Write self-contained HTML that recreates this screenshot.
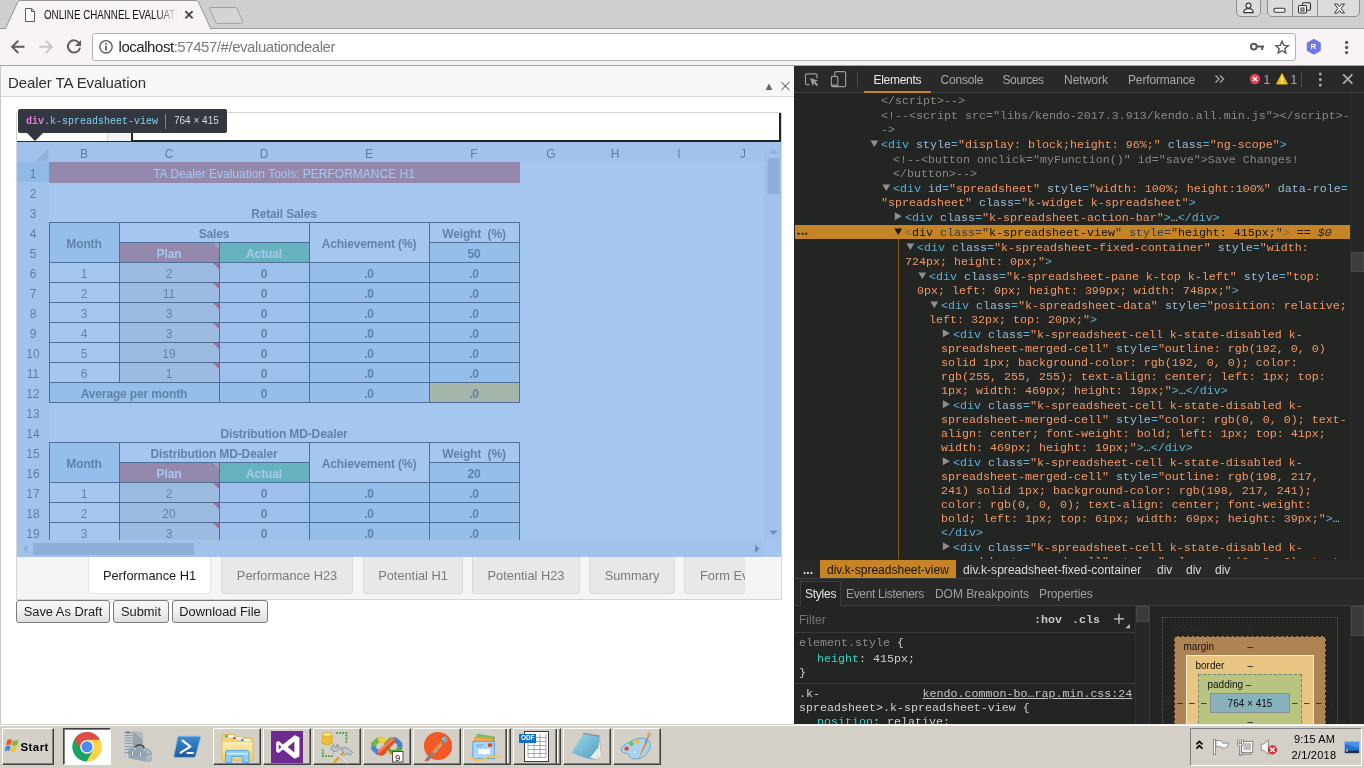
<!DOCTYPE html>
<html>
<head>
<meta charset="utf-8">
<title>ONLINE CHANNEL EVALUATION</title>
<style>
*{box-sizing:border-box;margin:0;padding:0}
html,body{width:1364px;height:768px;overflow:hidden;background:#fff;font-family:"Liberation Sans",sans-serif}
.abs{position:absolute}
#root{position:relative;width:1364px;height:768px;overflow:hidden;will-change:transform}
/* ---------- chrome frame ---------- */
#tabstrip{left:0;top:0;width:1364px;height:29px;background:#cfcfcf}
#toolbar{left:0;top:29px;width:1364px;height:36px;background:#f7f3f7}
#tbline{left:0;top:65px;width:1364px;height:1px;background:#a5a3a5}
#urlbox{left:92px;top:33px;width:1204px;height:28px;background:#fff;border:1px solid #b4b4b4;border-radius:3px}
.t{position:absolute;white-space:pre;line-height:1}
/* ---------- page ---------- */
#page{left:0;top:66px;width:794px;height:658px;background:#fff;overflow:hidden}
#phead{left:1px;top:0;width:793px;height:31px;background:#f7f7f7;border-bottom:1px solid #d9d9d9}
/* ---------- devtools ---------- */
#dt{left:794px;top:66px;width:570px;height:658px;background:#232523;overflow:hidden}
.mono{font-family:"Liberation Mono",monospace;font-size:11.667px}
.ln{position:absolute;height:14px;line-height:14px;white-space:pre;font-family:"Liberation Mono",monospace;font-size:11.667px;color:#898989}
.tg{color:#5db0d7}.an{color:#9bbbdc}.av{color:#f29766}.cm{color:#898989}
.tri{position:absolute;width:0;height:0}
/* ---------- taskbar ---------- */
#taskbar{left:0;top:724px;width:1364px;height:44px;background:#d4d0c8}
.tbtn{position:absolute;top:4px;height:37px;border:1px solid;border-color:#fff #404040 #404040 #fff;box-shadow:inset -1px -1px 0 #808080}
</style>
</head>
<body>
<div id="root">

<!-- ================= CHROME FRAME ================= -->
<div id="tabstrip" class="abs">
  <svg class="abs" style="left:0;top:0" width="260" height="29" viewBox="0 0 260 29">
    <path d="M0 28.5 L5.5 28.5 L18 1.5 Q18.6 0.5 20 0.5 L196 0.5 Q197.6 0.5 198.3 1.8 L210.8 28.5 L260 28.5 L260 29 L0 29 Z" fill="#f7f3f7"/>
    <path d="M5.5 28.5 L18 1.5 Q18.6 0.5 20 0.5 L196 0.5 Q197.6 0.5 198.3 1.8 L210.8 28.5" fill="#f7f3f7" stroke="#959395" stroke-width="1"/>
    <!-- new tab button -->
    <path d="M210.6 7.5 L235.4 7.5 Q236.6 7.5 237.2 8.6 L242.6 21.4 Q243 23.4 241.2 23.4 L217.6 23.4 Q216.2 23.4 215.6 22.2 L209.6 9 Q209.2 7.5 210.6 7.5 Z" fill="#d5d3d5" stroke="#a3a1a3" stroke-width="1"/>
    <!-- favicon -->
    <path d="M25.5 8.5 L31.5 8.5 L34.5 11.5 L34.5 21.5 L25.5 21.5 Z M31.5 8.5 L31.5 11.5 L34.5 11.5" fill="#fff" stroke="#5a5a5a" stroke-width="1"/>
    <!-- close x -->
    <path d="M185.4 11.2 L192.6 18.4 M192.6 11.2 L185.4 18.4" stroke="#444" stroke-width="1.9" fill="none"/>
  </svg>
  <div class="abs" style="left:210px;top:28px;width:1154px;height:1px;background:#9c9a9c"></div>
  <div class="abs" style="left:0;top:28px;width:6px;height:1px;background:#9c9a9c"></div>
  <div class="t" style="left:43.5px;top:8.7px;font-size:12px;color:#111;width:163px;overflow:hidden;transform:scaleX(0.815);transform-origin:0 0">ONLINE CHANNEL EVALUATION</div>
  <div class="abs" style="left:158px;top:6px;width:24px;height:16px;background:linear-gradient(to right,rgba(247,243,247,0),#f7f3f7 80%)"></div>
  <!-- window controls -->
  <div class="abs" style="left:1236px;top:-1px;width:25px;height:18px;border:1px solid #8e8e8e;border-radius:0 0 5px 5px;background:#dcdcdc"></div>
  <div class="abs" style="left:1267px;top:-1px;width:93px;height:18px;border:1px solid #8e8e8e;border-radius:0 0 5px 5px;background:#dcdcdc"></div>
  <div class="abs" style="left:1292px;top:0;width:1px;height:16px;background:#8e8e8e"></div>
  <div class="abs" style="left:1317px;top:0;width:1px;height:16px;background:#8e8e8e"></div>
  <svg class="abs" style="left:1236px;top:0" width="124" height="17" viewBox="0 0 124 17">
    <circle cx="12.5" cy="5.6" r="2.5" fill="#fff" stroke="#333" stroke-width="1.1"/>
    <path d="M7.8 12.6 Q7.8 8.6 12.5 8.6 Q17.2 8.6 17.2 12.6 Z" fill="#fff" stroke="#333" stroke-width="1.1"/>
    <rect x="38" y="8.2" width="11" height="4" rx="1.5" fill="#fff" stroke="#333" stroke-width="1.1"/>
    <rect x="66.5" y="2.8" width="8" height="7.5" rx="1.2" fill="#dcdcdc" stroke="#333" stroke-width="1.1"/>
    <rect x="62.5" y="5.5" width="8" height="7.5" rx="1.2" fill="#fff" stroke="#333" stroke-width="1.1"/>
    <rect x="65" y="8" width="3" height="3" fill="#dcdcdc" stroke="#333" stroke-width="1"/>
    <path d="M98.5 4 L101.5 4 L103.5 6.6 L105.5 4 L108.5 4 L105 8.5 L108.5 13 L105.5 13 L103.5 10.4 L101.5 13 L98.5 13 L102 8.5 Z" fill="#fff" stroke="#333" stroke-width="1"/>
  </svg>
</div>

<div id="toolbar" class="abs"></div>
<div id="tbline" class="abs"></div>
<div id="urlbox" class="abs"></div>
<svg class="abs" style="left:0;top:29px" width="1364" height="36" viewBox="0 29 1364 36">
  <!-- back -->
  <path d="M24.5 46.8 L12.5 46.8 M18.3 40.6 L12.1 46.8 L18.3 53" fill="none" stroke="#5a5a5a" stroke-width="1.9"/>
  <!-- forward -->
  <path d="M39.5 46.8 L51.5 46.8 M45.7 40.6 L51.9 46.8 L45.7 53" fill="none" stroke="#c9c7c9" stroke-width="1.9"/>
  <!-- reload -->
  <path d="M79.2 43.2 A6.1 6.1 0 1 0 80 47.6" fill="none" stroke="#5a5a5a" stroke-width="1.9"/>
  <path d="M81 40 L81 46 L75 46 Z" fill="#5a5a5a"/>
  <!-- info -->
  <circle cx="106" cy="46.8" r="6.2" fill="none" stroke="#5a5a5a" stroke-width="1.4"/>
  <rect x="105.2" y="45.8" width="1.7" height="4.8" fill="#5a5a5a"/>
  <rect x="105.2" y="43" width="1.7" height="1.7" fill="#5a5a5a"/>
  <!-- key -->
  <circle cx="1253.8" cy="46.6" r="2.9" fill="none" stroke="#5a5a5a" stroke-width="2"/>
  <path d="M1256.5 46.6 L1264 46.6 M1262.2 46.6 L1262.2 50" fill="none" stroke="#5a5a5a" stroke-width="2"/>
  <!-- star -->
  <path d="M1282 41.2 L1283.8 45.4 L1288.2 45.8 L1284.8 48.7 L1285.9 53 L1282 50.7 L1278.1 53 L1279.2 48.7 L1275.8 45.8 L1280.2 45.4 Z" fill="none" stroke="#5a5a5a" stroke-width="1.4" stroke-linejoin="miter"/>
  <!-- R hexagon -->
  <path d="M1313.8 38.8 L1320.8 42.8 L1320.8 50.8 L1313.8 54.8 L1306.8 50.8 L1306.8 42.8 Z" fill="#6b79e6"/>
  <!-- menu -->
  <circle cx="1346.6" cy="42.4" r="1.7" fill="#5a5a5a"/><circle cx="1346.6" cy="47.5" r="1.7" fill="#5a5a5a"/><circle cx="1346.6" cy="52.6" r="1.7" fill="#5a5a5a"/>
</svg>
<div class="t" style="left:1310.6px;top:43.3px;font-size:8px;font-weight:bold;color:#fff">R</div>
<div class="t" style="left:118.5px;top:38.5px;font-size:15px;letter-spacing:-0.45px;color:#222">localhost<span style="color:#7a7a7a">:57457/#/evaluationdealer</span></div>

<!-- ================= PAGE ================= -->
<div id="page" class="abs">
  <div class="abs" style="left:0;top:0;width:1px;height:658px;background:#c8c8c8"></div>
  <div id="phead" class="abs"></div>
  <div class="t" style="left:8px;top:9px;font-size:15px;color:#2e2e2e;letter-spacing:-0.08px">Dealer TA Evaluation</div>
  <svg class="abs" style="left:760px;top:14px" width="34" height="14" viewBox="760 80 34 14">
    <path d="M765.6 90 L769 83.2 L772.4 90 Z" fill="#6a6a6a"/>
    <path d="M781.3 82 L789.5 90.2 M789.5 82 L781.3 90.2" stroke="#3a3a3a" stroke-width="1" fill="none"/>
  </svg>
  <div class="abs" style="left:16px;top:46px;width:766px;height:488px;border:1px solid #d5d5d5;background:#fff"></div>
<div class="abs" style="left:107px;top:47px;width:1px;height:28px;background:#d9d9d9"></div>
<div class="abs" style="left:108px;top:67px;width:24px;height:8px;background:#f4f4f4"></div>
<div class="abs" style="left:17px;top:75px;width:115px;height:1px;background:#2a2a2a"></div>
<div class="abs" style="left:131px;top:47px;width:650px;height:29px;border:2px solid #222;border-top:0;background:#fff"></div>
<div class="abs" style="left:17px;top:76px;width:764px;height:415px;overflow:hidden;background:#fff;font-family:'Liberation Sans',sans-serif"><div class="abs" style="left:0px;top:0px;width:748px;height:20px;background:#f3f3f3"></div><div class="abs" style="left:0px;top:20px;width:32px;height:378px;background:#f3f3f3"></div><div class="abs" style="left:0px;top:20px;width:32px;height:20px;background:#c3dbe6"></div><svg class="abs" style="left:0;top:0" width="32" height="20"><path d="M31.5 6 L31.5 19.5 L18 19.5 Z" fill="#c4c4c4"/></svg><div class="abs" style="left:32px;top:0px;width:70px;height:20px;text-align:center;line-height:24px;font-size:12px;color:#262626;overflow:hidden">B</div><div class="abs" style="left:102px;top:0px;width:100px;height:20px;text-align:center;line-height:24px;font-size:12px;color:#262626;overflow:hidden">C</div><div class="abs" style="left:202px;top:0px;width:90px;height:20px;text-align:center;line-height:24px;font-size:12px;color:#262626;overflow:hidden">D</div><div class="abs" style="left:292px;top:0px;width:120px;height:20px;text-align:center;line-height:24px;font-size:12px;color:#262626;overflow:hidden">E</div><div class="abs" style="left:412px;top:0px;width:90px;height:20px;text-align:center;line-height:24px;font-size:12px;color:#262626;overflow:hidden">F</div><div class="abs" style="left:502px;top:0px;width:64px;height:20px;text-align:center;line-height:24px;font-size:12px;color:#262626;overflow:hidden">G</div><div class="abs" style="left:566px;top:0px;width:64px;height:20px;text-align:center;line-height:24px;font-size:12px;color:#262626;overflow:hidden">H</div><div class="abs" style="left:630px;top:0px;width:64px;height:20px;text-align:center;line-height:24px;font-size:12px;color:#262626;overflow:hidden">I</div><div class="abs" style="left:694px;top:0px;width:64px;height:20px;text-align:center;line-height:24px;font-size:12px;color:#262626;overflow:hidden">J</div><div class="abs" style="left:0px;top:20px;width:32px;height:20px;text-align:center;line-height:24px;font-size:12px;color:#262626">1</div><div class="abs" style="left:0px;top:40px;width:32px;height:20px;text-align:center;line-height:24px;font-size:12px;color:#262626">2</div><div class="abs" style="left:0px;top:60px;width:32px;height:20px;text-align:center;line-height:24px;font-size:12px;color:#262626">3</div><div class="abs" style="left:0px;top:80px;width:32px;height:20px;text-align:center;line-height:24px;font-size:12px;color:#262626">4</div><div class="abs" style="left:0px;top:100px;width:32px;height:20px;text-align:center;line-height:24px;font-size:12px;color:#262626">5</div><div class="abs" style="left:0px;top:120px;width:32px;height:20px;text-align:center;line-height:24px;font-size:12px;color:#262626">6</div><div class="abs" style="left:0px;top:140px;width:32px;height:20px;text-align:center;line-height:24px;font-size:12px;color:#262626">7</div><div class="abs" style="left:0px;top:160px;width:32px;height:20px;text-align:center;line-height:24px;font-size:12px;color:#262626">8</div><div class="abs" style="left:0px;top:180px;width:32px;height:20px;text-align:center;line-height:24px;font-size:12px;color:#262626">9</div><div class="abs" style="left:0px;top:200px;width:32px;height:20px;text-align:center;line-height:24px;font-size:12px;color:#262626">10</div><div class="abs" style="left:0px;top:220px;width:32px;height:20px;text-align:center;line-height:24px;font-size:12px;color:#262626">11</div><div class="abs" style="left:0px;top:240px;width:32px;height:20px;text-align:center;line-height:24px;font-size:12px;color:#262626">12</div><div class="abs" style="left:0px;top:260px;width:32px;height:20px;text-align:center;line-height:24px;font-size:12px;color:#262626">13</div><div class="abs" style="left:0px;top:280px;width:32px;height:20px;text-align:center;line-height:24px;font-size:12px;color:#262626">14</div><div class="abs" style="left:0px;top:300px;width:32px;height:20px;text-align:center;line-height:24px;font-size:12px;color:#262626">15</div><div class="abs" style="left:0px;top:320px;width:32px;height:20px;text-align:center;line-height:24px;font-size:12px;color:#262626">16</div><div class="abs" style="left:0px;top:340px;width:32px;height:20px;text-align:center;line-height:24px;font-size:12px;color:#262626">17</div><div class="abs" style="left:0px;top:360px;width:32px;height:20px;text-align:center;line-height:24px;font-size:12px;color:#262626">18</div><div class="abs" style="left:0px;top:380px;width:32px;height:20px;text-align:center;line-height:24px;font-size:12px;color:#262626">19</div><div class="abs" style="left:32px;top:20px;width:471px;height:21px;background:rgb(204,75,60)"></div><div class="abs" style="left:32px;top:20px;width:470px;height:20px;text-align:center;line-height:24px;font-size:12px;color:#fff;">TA Dealer Evaluation Tools: PERFORMANCE H1</div><div class="abs" style="left:32px;top:60px;width:470px;height:20px;text-align:center;line-height:24px;font-size:12px;color:#303a30;font-weight:bold;letter-spacing:-0.14px;">Retail Sales</div><div class="abs" style="left:32px;top:80px;width:70px;height:40px;background:rgb(212,231,240);text-align:center;line-height:44px;font-size:12px;color:#303a30;font-weight:bold;letter-spacing:-0.14px;">Month</div><div class="abs" style="left:102px;top:80px;width:190px;height:20px;text-align:center;line-height:24px;font-size:12px;color:#303a30;font-weight:bold;letter-spacing:-0.14px;">Sales</div><div class="abs" style="left:102px;top:100px;width:100px;height:20px;background:rgb(204,75,60);text-align:center;line-height:24px;font-size:12px;color:#fff;font-weight:bold;letter-spacing:-0.14px;">Plan</div><div class="abs" style="left:202px;top:100px;width:90px;height:20px;background:rgb(72,196,112);text-align:center;line-height:24px;font-size:12px;color:#fff;font-weight:bold;letter-spacing:-0.14px;">Actual</div><div class="abs" style="left:292px;top:80px;width:120px;height:40px;text-align:center;line-height:44px;font-size:12px;color:#303a30;font-weight:bold;letter-spacing:-0.14px;">Achievement (%)</div><div class="abs" style="left:412px;top:80px;width:90px;height:20px;text-align:center;line-height:24px;font-size:12px;color:#303a30;font-weight:bold;letter-spacing:-0.14px;">Weight&nbsp; (%)</div><div class="abs" style="left:412px;top:100px;width:90px;height:20px;background:rgb(212,231,240);text-align:center;line-height:24px;font-size:12px;color:#303a30;font-weight:bold;letter-spacing:-0.14px;">50</div><div class="abs" style="left:32px;top:120px;width:70px;height:20px;text-align:center;line-height:24px;font-size:12px;color:#303a30;">1</div><div class="abs" style="left:102px;top:120px;width:100px;height:20px;background:rgb(232,222,214);text-align:center;line-height:24px;font-size:12px;color:#303a30;">2</div><div class="abs" style="left:202px;top:120px;width:90px;height:20px;background:rgb(232,240,246);text-align:center;line-height:24px;font-size:12px;color:#303a30;font-weight:bold;letter-spacing:-0.14px;">0</div><div class="abs" style="left:292px;top:120px;width:120px;height:20px;background:rgb(212,231,240);text-align:center;line-height:24px;font-size:12px;color:#303a30;font-weight:bold;letter-spacing:-0.14px;">.0</div><div class="abs" style="left:412px;top:120px;width:90px;height:20px;background:rgb(212,231,240);text-align:center;line-height:24px;font-size:12px;color:#303a30;font-weight:bold;letter-spacing:-0.14px;">.0</div><div class="abs" style="left:32px;top:140px;width:70px;height:20px;text-align:center;line-height:24px;font-size:12px;color:#303a30;">2</div><div class="abs" style="left:102px;top:140px;width:100px;height:20px;background:rgb(232,222,214);text-align:center;line-height:24px;font-size:12px;color:#303a30;">11</div><div class="abs" style="left:202px;top:140px;width:90px;height:20px;background:rgb(232,240,246);text-align:center;line-height:24px;font-size:12px;color:#303a30;font-weight:bold;letter-spacing:-0.14px;">0</div><div class="abs" style="left:292px;top:140px;width:120px;height:20px;background:rgb(212,231,240);text-align:center;line-height:24px;font-size:12px;color:#303a30;font-weight:bold;letter-spacing:-0.14px;">.0</div><div class="abs" style="left:412px;top:140px;width:90px;height:20px;background:rgb(212,231,240);text-align:center;line-height:24px;font-size:12px;color:#303a30;font-weight:bold;letter-spacing:-0.14px;">.0</div><div class="abs" style="left:32px;top:160px;width:70px;height:20px;text-align:center;line-height:24px;font-size:12px;color:#303a30;">3</div><div class="abs" style="left:102px;top:160px;width:100px;height:20px;background:rgb(232,222,214);text-align:center;line-height:24px;font-size:12px;color:#303a30;">3</div><div class="abs" style="left:202px;top:160px;width:90px;height:20px;background:rgb(232,240,246);text-align:center;line-height:24px;font-size:12px;color:#303a30;font-weight:bold;letter-spacing:-0.14px;">0</div><div class="abs" style="left:292px;top:160px;width:120px;height:20px;background:rgb(212,231,240);text-align:center;line-height:24px;font-size:12px;color:#303a30;font-weight:bold;letter-spacing:-0.14px;">.0</div><div class="abs" style="left:412px;top:160px;width:90px;height:20px;background:rgb(212,231,240);text-align:center;line-height:24px;font-size:12px;color:#303a30;font-weight:bold;letter-spacing:-0.14px;">.0</div><div class="abs" style="left:32px;top:180px;width:70px;height:20px;text-align:center;line-height:24px;font-size:12px;color:#303a30;">4</div><div class="abs" style="left:102px;top:180px;width:100px;height:20px;background:rgb(232,222,214);text-align:center;line-height:24px;font-size:12px;color:#303a30;">3</div><div class="abs" style="left:202px;top:180px;width:90px;height:20px;background:rgb(232,240,246);text-align:center;line-height:24px;font-size:12px;color:#303a30;font-weight:bold;letter-spacing:-0.14px;">0</div><div class="abs" style="left:292px;top:180px;width:120px;height:20px;background:rgb(212,231,240);text-align:center;line-height:24px;font-size:12px;color:#303a30;font-weight:bold;letter-spacing:-0.14px;">.0</div><div class="abs" style="left:412px;top:180px;width:90px;height:20px;background:rgb(212,231,240);text-align:center;line-height:24px;font-size:12px;color:#303a30;font-weight:bold;letter-spacing:-0.14px;">.0</div><div class="abs" style="left:32px;top:200px;width:70px;height:20px;text-align:center;line-height:24px;font-size:12px;color:#303a30;">5</div><div class="abs" style="left:102px;top:200px;width:100px;height:20px;background:rgb(232,222,214);text-align:center;line-height:24px;font-size:12px;color:#303a30;">19</div><div class="abs" style="left:202px;top:200px;width:90px;height:20px;background:rgb(232,240,246);text-align:center;line-height:24px;font-size:12px;color:#303a30;font-weight:bold;letter-spacing:-0.14px;">0</div><div class="abs" style="left:292px;top:200px;width:120px;height:20px;background:rgb(212,231,240);text-align:center;line-height:24px;font-size:12px;color:#303a30;font-weight:bold;letter-spacing:-0.14px;">.0</div><div class="abs" style="left:412px;top:200px;width:90px;height:20px;background:rgb(212,231,240);text-align:center;line-height:24px;font-size:12px;color:#303a30;font-weight:bold;letter-spacing:-0.14px;">.0</div><div class="abs" style="left:32px;top:220px;width:70px;height:20px;text-align:center;line-height:24px;font-size:12px;color:#303a30;">6</div><div class="abs" style="left:102px;top:220px;width:100px;height:20px;background:rgb(232,222,214);text-align:center;line-height:24px;font-size:12px;color:#303a30;">1</div><div class="abs" style="left:202px;top:220px;width:90px;height:20px;background:rgb(232,240,246);text-align:center;line-height:24px;font-size:12px;color:#303a30;font-weight:bold;letter-spacing:-0.14px;">0</div><div class="abs" style="left:292px;top:220px;width:120px;height:20px;background:rgb(212,231,240);text-align:center;line-height:24px;font-size:12px;color:#303a30;font-weight:bold;letter-spacing:-0.14px;">.0</div><div class="abs" style="left:412px;top:220px;width:90px;height:20px;background:rgb(212,231,240);text-align:center;line-height:24px;font-size:12px;color:#303a30;font-weight:bold;letter-spacing:-0.14px;">.0</div><div class="abs" style="left:32px;top:240px;width:170px;height:20px;background:rgb(212,231,240);text-align:center;line-height:24px;font-size:12px;color:#303a30;font-weight:bold;letter-spacing:-0.14px;">Average per month</div><div class="abs" style="left:202px;top:240px;width:90px;height:20px;background:rgb(212,231,240);text-align:center;line-height:24px;font-size:12px;color:#303a30;font-weight:bold;letter-spacing:-0.14px;">0</div><div class="abs" style="left:292px;top:240px;width:120px;height:20px;background:rgb(212,231,240);text-align:center;line-height:24px;font-size:12px;color:#303a30;font-weight:bold;letter-spacing:-0.14px;">.0</div><div class="abs" style="left:412px;top:240px;width:90px;height:20px;background:rgb(254,207,54);text-align:center;line-height:24px;font-size:12px;color:#303a30;font-weight:bold;letter-spacing:-0.14px;">.0</div><div class="abs" style="left:32px;top:280px;width:470px;height:20px;text-align:center;line-height:24px;font-size:12px;color:#303a30;font-weight:bold;letter-spacing:-0.14px;">Distribution MD-Dealer</div><div class="abs" style="left:32px;top:300px;width:70px;height:40px;background:rgb(212,231,240);text-align:center;line-height:44px;font-size:12px;color:#303a30;font-weight:bold;letter-spacing:-0.14px;">Month</div><div class="abs" style="left:102px;top:300px;width:190px;height:20px;text-align:center;line-height:24px;font-size:12px;color:#303a30;font-weight:bold;letter-spacing:-0.14px;">Distribution MD-Dealer</div><div class="abs" style="left:102px;top:320px;width:100px;height:20px;background:rgb(204,75,60);text-align:center;line-height:24px;font-size:12px;color:#fff;font-weight:bold;letter-spacing:-0.14px;">Plan</div><div class="abs" style="left:202px;top:320px;width:90px;height:20px;background:rgb(72,196,112);text-align:center;line-height:24px;font-size:12px;color:#fff;font-weight:bold;letter-spacing:-0.14px;">Actual</div><div class="abs" style="left:292px;top:300px;width:120px;height:40px;text-align:center;line-height:44px;font-size:12px;color:#303a30;font-weight:bold;letter-spacing:-0.14px;">Achievement (%)</div><div class="abs" style="left:412px;top:300px;width:90px;height:20px;text-align:center;line-height:24px;font-size:12px;color:#303a30;font-weight:bold;letter-spacing:-0.14px;">Weight&nbsp; (%)</div><div class="abs" style="left:412px;top:320px;width:90px;height:20px;background:rgb(212,231,240);text-align:center;line-height:24px;font-size:12px;color:#303a30;font-weight:bold;letter-spacing:-0.14px;">20</div><div class="abs" style="left:32px;top:340px;width:70px;height:20px;text-align:center;line-height:24px;font-size:12px;color:#303a30;">1</div><div class="abs" style="left:102px;top:340px;width:100px;height:20px;background:rgb(232,222,214);text-align:center;line-height:24px;font-size:12px;color:#303a30;">2</div><div class="abs" style="left:202px;top:340px;width:90px;height:20px;background:rgb(232,240,246);text-align:center;line-height:24px;font-size:12px;color:#303a30;font-weight:bold;letter-spacing:-0.14px;">0</div><div class="abs" style="left:292px;top:340px;width:120px;height:20px;background:rgb(212,231,240);text-align:center;line-height:24px;font-size:12px;color:#303a30;font-weight:bold;letter-spacing:-0.14px;">.0</div><div class="abs" style="left:412px;top:340px;width:90px;height:20px;background:rgb(212,231,240);text-align:center;line-height:24px;font-size:12px;color:#303a30;font-weight:bold;letter-spacing:-0.14px;">.0</div><div class="abs" style="left:32px;top:360px;width:70px;height:20px;text-align:center;line-height:24px;font-size:12px;color:#303a30;">2</div><div class="abs" style="left:102px;top:360px;width:100px;height:20px;background:rgb(232,222,214);text-align:center;line-height:24px;font-size:12px;color:#303a30;">20</div><div class="abs" style="left:202px;top:360px;width:90px;height:20px;background:rgb(232,240,246);text-align:center;line-height:24px;font-size:12px;color:#303a30;font-weight:bold;letter-spacing:-0.14px;">0</div><div class="abs" style="left:292px;top:360px;width:120px;height:20px;background:rgb(212,231,240);text-align:center;line-height:24px;font-size:12px;color:#303a30;font-weight:bold;letter-spacing:-0.14px;">.0</div><div class="abs" style="left:412px;top:360px;width:90px;height:20px;background:rgb(212,231,240);text-align:center;line-height:24px;font-size:12px;color:#303a30;font-weight:bold;letter-spacing:-0.14px;">.0</div><div class="abs" style="left:32px;top:380px;width:70px;height:20px;text-align:center;line-height:24px;font-size:12px;color:#303a30;">3</div><div class="abs" style="left:102px;top:380px;width:100px;height:20px;background:rgb(232,222,214);text-align:center;line-height:24px;font-size:12px;color:#303a30;">3</div><div class="abs" style="left:202px;top:380px;width:90px;height:20px;background:rgb(232,240,246);text-align:center;line-height:24px;font-size:12px;color:#303a30;font-weight:bold;letter-spacing:-0.14px;">0</div><div class="abs" style="left:292px;top:380px;width:120px;height:20px;background:rgb(212,231,240);text-align:center;line-height:24px;font-size:12px;color:#303a30;font-weight:bold;letter-spacing:-0.14px;">.0</div><div class="abs" style="left:412px;top:380px;width:90px;height:20px;background:rgb(212,231,240);text-align:center;line-height:24px;font-size:12px;color:#303a30;font-weight:bold;letter-spacing:-0.14px;">.0</div><div class="abs" style="left:32px;top:80px;width:471px;height:1px;background:#000"></div><div class="abs" style="left:102px;top:100px;width:190px;height:1px;background:#000"></div><div class="abs" style="left:412px;top:100px;width:91px;height:1px;background:#000"></div><div class="abs" style="left:32px;top:120px;width:471px;height:1px;background:#000"></div><div class="abs" style="left:32px;top:140px;width:471px;height:1px;background:#000"></div><div class="abs" style="left:32px;top:160px;width:471px;height:1px;background:#000"></div><div class="abs" style="left:32px;top:180px;width:471px;height:1px;background:#000"></div><div class="abs" style="left:32px;top:200px;width:471px;height:1px;background:#000"></div><div class="abs" style="left:32px;top:220px;width:471px;height:1px;background:#000"></div><div class="abs" style="left:32px;top:240px;width:471px;height:1px;background:#000"></div><div class="abs" style="left:32px;top:260px;width:471px;height:1px;background:#000"></div><div class="abs" style="left:32px;top:80px;width:1px;height:181px;background:#000"></div><div class="abs" style="left:502px;top:80px;width:1px;height:181px;background:#000"></div><div class="abs" style="left:102px;top:80px;width:1px;height:161px;background:#000"></div><div class="abs" style="left:202px;top:100px;width:1px;height:161px;background:#000"></div><div class="abs" style="left:292px;top:80px;width:1px;height:181px;background:#000"></div><div class="abs" style="left:412px;top:80px;width:1px;height:181px;background:#000"></div><svg class="abs" style="left:196px;top:101px" width="6" height="6"><path d="M0 0 L6 0 L6 6 Z" fill="#f28a8a"/></svg><svg class="abs" style="left:196px;top:121px" width="6" height="6"><path d="M0 0 L6 0 L6 6 Z" fill="#ff0000"/></svg><svg class="abs" style="left:196px;top:141px" width="6" height="6"><path d="M0 0 L6 0 L6 6 Z" fill="#ff0000"/></svg><svg class="abs" style="left:196px;top:161px" width="6" height="6"><path d="M0 0 L6 0 L6 6 Z" fill="#ff0000"/></svg><svg class="abs" style="left:196px;top:181px" width="6" height="6"><path d="M0 0 L6 0 L6 6 Z" fill="#ff0000"/></svg><svg class="abs" style="left:196px;top:201px" width="6" height="6"><path d="M0 0 L6 0 L6 6 Z" fill="#ff0000"/></svg><svg class="abs" style="left:196px;top:221px" width="6" height="6"><path d="M0 0 L6 0 L6 6 Z" fill="#ff0000"/></svg><div class="abs" style="left:32px;top:300px;width:471px;height:1px;background:#000"></div><div class="abs" style="left:102px;top:320px;width:190px;height:1px;background:#000"></div><div class="abs" style="left:412px;top:320px;width:91px;height:1px;background:#000"></div><div class="abs" style="left:32px;top:340px;width:471px;height:1px;background:#000"></div><div class="abs" style="left:32px;top:360px;width:471px;height:1px;background:#000"></div><div class="abs" style="left:32px;top:380px;width:471px;height:1px;background:#000"></div><div class="abs" style="left:32px;top:300px;width:1px;height:99px;background:#000"></div><div class="abs" style="left:502px;top:300px;width:1px;height:99px;background:#000"></div><div class="abs" style="left:102px;top:300px;width:1px;height:99px;background:#000"></div><div class="abs" style="left:202px;top:320px;width:1px;height:79px;background:#000"></div><div class="abs" style="left:292px;top:300px;width:1px;height:99px;background:#000"></div><div class="abs" style="left:412px;top:300px;width:1px;height:99px;background:#000"></div><svg class="abs" style="left:196px;top:321px" width="6" height="6"><path d="M0 0 L6 0 L6 6 Z" fill="#f28a8a"/></svg><svg class="abs" style="left:196px;top:341px" width="6" height="6"><path d="M0 0 L6 0 L6 6 Z" fill="#ff0000"/></svg><svg class="abs" style="left:196px;top:361px" width="6" height="6"><path d="M0 0 L6 0 L6 6 Z" fill="#ff0000"/></svg><svg class="abs" style="left:196px;top:381px" width="6" height="6"><path d="M0 0 L6 0 L6 6 Z" fill="#ff0000"/></svg><div class="abs" style="left:748px;top:0px;width:16px;height:398px;background:#f3f3f3;border-left:1px solid #e2e2e2"></div><svg class="abs" style="left:748px;top:0" width="16" height="398"><path d="M4 11.5 L8.5 7 L13 11.5 Z" fill="#b4b4b4"/><rect x="2.5" y="16" width="12" height="36" fill="#b8b8b8"/><path d="M4.5 388.5 L12.5 388.5 L8.5 393 Z" fill="#555"/></svg><div class="abs" style="left:0px;top:398px;width:764px;height:17px;background:#f3f3f3"></div><div class="abs" style="left:748px;top:398px;width:16px;height:17px;background:#fbfbfb"></div><svg class="abs" style="left:0;top:398px" width="764" height="17"><path d="M10.5 4.5 L10.5 13 L6 8.8 Z" fill="#b4b4b4"/><rect x="16" y="3" width="161" height="12" fill="#b8b8b8"/><path d="M738 4.5 L738 13 L742.5 8.8 Z" fill="#555"/></svg><div class="abs" style="left:0;top:0;width:764px;height:415px;background:rgba(119,169,230,.66)"></div></div>
<div class="abs" style="left:17px;top:491px;width:764px;height:42px;background:#f5f5f5"></div>
<div class="abs" style="left:17px;top:491px;width:728px;height:42px;overflow:hidden"><div class="abs" style="left:71px;top:0;width:123px;background:#fff;color:#1a1a1a;border:1px solid #e4e4e4;border-top:0;height:37px;border-radius:0 0 4px 4px;font-size:12.8px;line-height:37px;text-align:center;white-space:pre;overflow:hidden">Performance H1</div><div class="abs" style="left:204px;top:0;width:132px;background:#e8e8e8;color:#7b7b7b;border:1px solid #dadada;border-top:0;height:37px;border-radius:0 0 4px 4px;font-size:12.8px;line-height:37px;text-align:center;white-space:pre;overflow:hidden">Performance H23</div><div class="abs" style="left:346px;top:0;width:100px;background:#e8e8e8;color:#7b7b7b;border:1px solid #dadada;border-top:0;height:37px;border-radius:0 0 4px 4px;font-size:12.8px;line-height:37px;text-align:center;white-space:pre;overflow:hidden">Potential H1</div><div class="abs" style="left:455px;top:0;width:108px;background:#e8e8e8;color:#7b7b7b;border:1px solid #dadada;border-top:0;height:37px;border-radius:0 0 4px 4px;font-size:12.8px;line-height:37px;text-align:center;white-space:pre;overflow:hidden">Potential H23</div><div class="abs" style="left:572px;top:0;width:86px;background:#e8e8e8;color:#7b7b7b;border:1px solid #dadada;border-top:0;height:37px;border-radius:0 0 4px 4px;font-size:12.8px;line-height:37px;text-align:center;white-space:pre;overflow:hidden">Summary</div><div class="abs" style="left:667px;top:0;width:130px;background:#e8e8e8;color:#7b7b7b;border:1px solid #dadada;border-top:0;height:37px;border-radius:0 0 4px 4px;font-size:12.8px;line-height:37px;text-align:left;padding-left:15px;white-space:pre;overflow:hidden">Form Evaluation</div></div>
<div class="abs" style="left:16px;top:534px;width:94px;height:23px;border:1px solid #7a7a7a;border-radius:3px;background:linear-gradient(#f8f8f8,#f1f1f1 45%,#dedede);font-size:12.85px;line-height:21.5px;text-align:center;color:#1a1a1a;white-space:pre">Save As Draft</div>
<div class="abs" style="left:113px;top:534px;width:56px;height:23px;border:1px solid #7a7a7a;border-radius:3px;background:linear-gradient(#f8f8f8,#f1f1f1 45%,#dedede);font-size:12.85px;line-height:21.5px;text-align:center;color:#1a1a1a;white-space:pre">Submit</div>
<div class="abs" style="left:172px;top:534px;width:96px;height:23px;border:1px solid #7a7a7a;border-radius:3px;background:linear-gradient(#f8f8f8,#f1f1f1 45%,#dedede);font-size:12.85px;line-height:21.5px;text-align:center;color:#1a1a1a;white-space:pre">Download File</div>
<div class="abs" style="left:18px;top:43px;width:209px;height:24px;background:#333740;border-radius:2px"></div>
<svg class="abs" style="left:27px;top:67px" width="16" height="8"><path d="M0 0 L16 0 L8 8 Z" fill="#333740"/></svg>
<div class="t" style="left:26px;top:51.2px;font-family:'Liberation Mono',monospace;font-size:10px;color:#7fd2f5"><span style="color:#ee78e6;font-weight:bold">div</span>.k-spreadsheet-view</div>
<div class="abs" style="left:165px;top:48px;width:1px;height:15px;background:#8b8172"></div>
<div class="t" style="left:174px;top:50.099999999999994px;font-size:10px;color:#d9d9d9">764 × 415</div>
</div>

<!-- ================= DEVTOOLS ================= -->
<div id="dt" class="abs">
  <div class="abs" style="left:0px;top:0px;width:570px;height:26px;background:#292929"></div>
<div class="abs" style="left:0px;top:26px;width:570px;height:1px;background:#3d3d3d"></div>
<div class="abs" style="left:70px;top:25px;width:67px;height:2px;background:#cc8518"></div>
<div class="abs" style="left:63px;top:5px;width:1px;height:16px;background:#4a4a4a"></div>
<div class="abs" style="left:507px;top:5px;width:1px;height:16px;background:#4a4a4a"></div>
<div class="t" style="left:79.5px;top:8px;font-size:12px;color:#e8e8e8;letter-spacing:-0.3px">Elements</div>
<div class="t" style="left:146.5px;top:8px;font-size:12px;color:#a8a8a8;letter-spacing:-0.2px">Console</div>
<div class="t" style="left:208.5px;top:8px;font-size:12px;color:#a8a8a8;letter-spacing:-0.4px">Sources</div>
<div class="t" style="left:270px;top:8px;font-size:12px;color:#a8a8a8;letter-spacing:0px">Network</div>
<div class="t" style="left:334px;top:8px;font-size:12px;color:#a8a8a8;letter-spacing:-0.15px">Performance</div>
<div class="t" style="left:469.5px;top:8px;font-size:12px;color:#a8a8a8">1</div>
<div class="t" style="left:496.5px;top:8px;font-size:12px;color:#a8a8a8">1</div>
<svg class="abs" style="left:0;top:0" width="570" height="27" viewBox="794 66 570 27">
<path d="M817 78.5 L817 75.2 Q817 73.8 815.6 73.8 L806.9 73.8 Q805.5 73.8 805.5 75.2 L805.5 83.3 Q805.5 84.7 806.9 84.7 L809.5 84.7" fill="none" stroke="#9a9a9a" stroke-width="1.2"/>
<path d="M810 78 L818 80.6 L815.3 81.9 L818.2 84.8 L816.8 86.2 L813.9 83.3 L812.6 86 Z" fill="#9a9a9a"/>
<rect x="834.8" y="71.6" width="10.8" height="15" rx="1.2" fill="none" stroke="#9a9a9a" stroke-width="1.2"/>
<rect x="831.4" y="76.4" width="6.4" height="10.2" rx="1.2" fill="#292929" stroke="#9a9a9a" stroke-width="1.2"/>
<rect x="832" y="84.6" width="5.2" height="1.6" fill="#9a9a9a"/>
<path d="M1215.5 75.5 L1219 79 L1215.5 82.5 M1220 75.5 L1223.5 79 L1220 82.5" fill="none" stroke="#a8a8a8" stroke-width="1.3"/>
<circle cx="1255" cy="79" r="5.2" fill="#e0404f"/>
<path d="M1252.9 76.9 L1257.1 81.1 M1257.1 76.9 L1252.9 81.1" stroke="#fff" stroke-width="1.4"/>
<path d="M1282 73.6 L1287.4 84 L1276.6 84 Z" fill="#f4bd00" stroke="#f4bd00" stroke-width="1" stroke-linejoin="round"/>
<rect x="1281.3" y="77" width="1.5" height="4" fill="#fff"/><rect x="1281.3" y="82" width="1.5" height="1.4" fill="#fff"/>
<circle cx="1320.3" cy="73.9" r="1.5" fill="#a8a8a8"/><circle cx="1320.3" cy="79.4" r="1.5" fill="#a8a8a8"/><circle cx="1320.3" cy="84.9" r="1.5" fill="#a8a8a8"/>
<path d="M1343.2 74.4 L1352.4 83.6 M1352.4 74.4 L1343.2 83.6" stroke="#b4b4b4" stroke-width="1.6"/>
</svg>
<div class="abs" style="left:0;top:27px;width:570px;height:466px;overflow:hidden"><div class="abs" style="left:0;top:-27px;width:570px;height:600px"><div class="abs" style="left:1px;top:159px;width:555px;height:14px;background:#c58527"></div><div class="abs" style="left:104px;top:173px;width:1px;height:321px;background:#8a5a14"></div><div class="ln" style="left:87px;top:28px">&lt;/script&gt;--&gt;</div><div class="ln" style="left:87px;top:43px">&lt;!--&lt;script src=&quot;libs/kendo-2017.3.913/kendo.all.min.js&quot;&gt;&lt;/script&gt;-</div><div class="ln" style="left:87px;top:57px">-&gt;</div><div class="ln" style="left:87px;top:72px"><span class="tg">&lt;div</span> <span class="an">style</span><span class="tg">=</span><span class="av">"display: block;height: 96%;"</span> <span class="an">class</span><span class="tg">=</span><span class="av">"ng-scope"</span><span class="tg">&gt;</span></div><svg class="abs" style="left:76px;top:74px" width="9" height="8"><path d="M0.4 0.6 L8.2 0.6 L4.3 6.9 Z" fill="#8f8f8f"/></svg><div class="ln" style="left:99px;top:87px">&lt;!--&lt;button onclick=&quot;myFunction()&quot; id=&quot;save&quot;&gt;Save Changes!</div><div class="ln" style="left:99px;top:101px">&lt;/button&gt;--&gt;</div><div class="ln" style="left:99px;top:116px"><span class="tg">&lt;div</span> <span class="an">id</span><span class="tg">=</span><span class="av">"spreadsheet"</span> <span class="an">style</span><span class="tg">=</span><span class="av">"width: 100%; height:100%"</span> <span class="an">data-role</span><span class="tg">=</span></div><svg class="abs" style="left:88px;top:118px" width="9" height="8"><path d="M0.4 0.6 L8.2 0.6 L4.3 6.9 Z" fill="#8f8f8f"/></svg><div class="ln" style="left:87px;top:130px"><span class="av">&quot;spreadsheet&quot;</span> <span class="an">class</span><span class="tg">=</span><span class="av">"k-widget k-spreadsheet"</span><span class="tg">&gt;</span></div><div class="ln" style="left:111px;top:145px"><span class="tg">&lt;div</span> <span class="an">class</span><span class="tg">=</span><span class="av">"k-spreadsheet-action-bar"</span><span class="tg">&gt;</span><span style="color:#d0d0d0">…</span><span class="tg">&lt;/div&gt;</span></div><svg class="abs" style="left:100px;top:146px" width="8" height="10"><path d="M0.8 0.3 L7.8 4.3 L0.8 8.3 Z" fill="#8f8f8f"/></svg><div class="ln" style="left:111px;top:160px"><span style="color:#7d6a45">&lt;</span><span style="color:#101010">div</span> <span style="color:#2b3a52">class=</span><span style="color:#3a2a10">"</span><span style="color:#101010">k-spreadsheet-view</span><span style="color:#3a2a10">"</span> <span style="color:#2b3a52">style=</span><span style="color:#3a2a10">"</span><span style="color:#101010">height: 415px;</span><span style="color:#3a2a10">"</span><span style="color:#7d6a45">&gt;</span><span style="color:#2a1f0c"> == <i>$0</i></span></div><svg class="abs" style="left:100px;top:162px" width="9" height="8"><path d="M0.4 0.6 L8.2 0.6 L4.3 6.9 Z" fill="#1a1a1a"/></svg><div class="ln" style="left:123px;top:175px"><span class="tg">&lt;div</span> <span class="an">class</span><span class="tg">=</span><span class="av">"k-spreadsheet-fixed-container"</span> <span class="an">style</span><span class="tg">=</span><span class="av">&quot;width:</span></div><svg class="abs" style="left:112px;top:177px" width="9" height="8"><path d="M0.4 0.6 L8.2 0.6 L4.3 6.9 Z" fill="#8f8f8f"/></svg><div class="ln" style="left:111px;top:189px"><span class="av">724px; height: 0px;&quot;</span><span class="tg">&gt;</span></div><div class="ln" style="left:135px;top:204px"><span class="tg">&lt;div</span> <span class="an">class</span><span class="tg">=</span><span class="av">"k-spreadsheet-pane k-top k-left"</span> <span class="an">style</span><span class="tg">=</span><span class="av">&quot;top:</span></div><svg class="abs" style="left:124px;top:206px" width="9" height="8"><path d="M0.4 0.6 L8.2 0.6 L4.3 6.9 Z" fill="#8f8f8f"/></svg><div class="ln" style="left:123px;top:218px"><span class="av">0px; left: 0px; height: 399px; width: 748px;&quot;</span><span class="tg">&gt;</span></div><div class="ln" style="left:147px;top:233px"><span class="tg">&lt;div</span> <span class="an">class</span><span class="tg">=</span><span class="av">"k-spreadsheet-data"</span> <span class="an">style</span><span class="tg">=</span><span class="av">&quot;position: relative;</span></div><svg class="abs" style="left:136px;top:235px" width="9" height="8"><path d="M0.4 0.6 L8.2 0.6 L4.3 6.9 Z" fill="#8f8f8f"/></svg><div class="ln" style="left:135px;top:247px"><span class="av">left: 32px; top: 20px;&quot;</span><span class="tg">&gt;</span></div><div class="ln" style="left:159px;top:262px"><span class="tg">&lt;div</span> <span class="an">class</span><span class="tg">=</span><span class="av">&quot;k-spreadsheet-cell k-state-disabled k-</span></div><svg class="abs" style="left:148px;top:263px" width="8" height="10"><path d="M0.8 0.3 L7.8 4.3 L0.8 8.3 Z" fill="#8f8f8f"/></svg><div class="ln" style="left:147px;top:276px"><span class="av">spreadsheet-merged-cell&quot;</span> <span class="an">style</span><span class="tg">=</span><span class="av">&quot;outline: rgb(192, 0, 0)</span></div><div class="ln" style="left:147px;top:290px"><span class="av">solid 1px; background-color: rgb(192, 0, 0); color:</span></div><div class="ln" style="left:147px;top:304px"><span class="av">rgb(255, 255, 255); text-align: center; left: 1px; top:</span></div><div class="ln" style="left:147px;top:318px"><span class="av">1px; width: 469px; height: 19px;&quot;</span><span class="tg">&gt;</span><span style="color:#d0d0d0">…</span><span class="tg">&lt;/div&gt;</span></div><div class="ln" style="left:159px;top:333px"><span class="tg">&lt;div</span> <span class="an">class</span><span class="tg">=</span><span class="av">&quot;k-spreadsheet-cell k-state-disabled k-</span></div><svg class="abs" style="left:148px;top:334px" width="8" height="10"><path d="M0.8 0.3 L7.8 4.3 L0.8 8.3 Z" fill="#8f8f8f"/></svg><div class="ln" style="left:147px;top:347px"><span class="av">spreadsheet-merged-cell&quot;</span> <span class="an">style</span><span class="tg">=</span><span class="av">&quot;color: rgb(0, 0, 0); text-</span></div><div class="ln" style="left:147px;top:361px"><span class="av">align: center; font-weight: bold; left: 1px; top: 41px;</span></div><div class="ln" style="left:147px;top:375px"><span class="av">width: 469px; height: 19px;&quot;</span><span class="tg">&gt;</span><span style="color:#d0d0d0">…</span><span class="tg">&lt;/div&gt;</span></div><div class="ln" style="left:159px;top:390px"><span class="tg">&lt;div</span> <span class="an">class</span><span class="tg">=</span><span class="av">&quot;k-spreadsheet-cell k-state-disabled k-</span></div><svg class="abs" style="left:148px;top:391px" width="8" height="10"><path d="M0.8 0.3 L7.8 4.3 L0.8 8.3 Z" fill="#8f8f8f"/></svg><div class="ln" style="left:147px;top:404px"><span class="av">spreadsheet-merged-cell&quot;</span> <span class="an">style</span><span class="tg">=</span><span class="av">&quot;outline: rgb(198, 217,</span></div><div class="ln" style="left:147px;top:418px"><span class="av">241) solid 1px; background-color: rgb(198, 217, 241);</span></div><div class="ln" style="left:147px;top:432px"><span class="av">color: rgb(0, 0, 0); text-align: center; font-weight:</span></div><div class="ln" style="left:147px;top:446px"><span class="av">bold; left: 1px; top: 61px; width: 69px; height: 39px;&quot;</span><span class="tg">&gt;</span><span style="color:#d0d0d0">…</span></div><div class="ln" style="left:147px;top:460px"><span class="tg">&lt;/div&gt;</span></div><div class="ln" style="left:159px;top:475px"><span class="tg">&lt;div</span> <span class="an">class</span><span class="tg">=</span><span class="av">&quot;k-spreadsheet-cell k-state-disabled k-</span></div><svg class="abs" style="left:148px;top:476px" width="8" height="10"><path d="M0.8 0.3 L7.8 4.3 L0.8 8.3 Z" fill="#8f8f8f"/></svg><div class="ln" style="left:147px;top:489px"><span class="av">spreadsheet-merged-cell&quot;</span> <span class="an">style</span><span class="tg">=</span><span class="av">&quot;color: rgb(0, 0, 0); text-</span></div><div class="t" style="left:3px;top:163.5px;font-size:8.6px;color:#3a2a10;letter-spacing:0.9px">•••</div></div></div>
<div class="abs" style="left:556px;top:27px;width:14px;height:467px;background:#272727;border-left:1px solid #2f2f2f"></div>
<div class="abs" style="left:557px;top:186px;width:13px;height:20px;background:#3d3d3d;border:1px solid #4a4a4a"></div>
<div class="abs" style="left:0px;top:494px;width:570px;height:19px;background:#292929"></div>
<div class="abs" style="left:0px;top:512px;width:570px;height:1px;background:#3d3d3d"></div>
<div class="abs" style="left:26px;top:494px;width:136px;height:18px;background:#c58527"></div>
<div class="t" style="left:9px;top:498px;font-size:12px;color:#e0e0e0;font-weight:bold">...</div>
<div class="t" style="left:33px;top:498px;font-size:12px;color:#1c1409;letter-spacing:0px">div.k-spreadsheet-view</div>
<div class="t" style="left:169px;top:498px;font-size:12px;color:#dcdcdc;letter-spacing:0.05px">div.k-spreadsheet-fixed-container</div>
<div class="t" style="left:363px;top:498px;font-size:12px;color:#dcdcdc">div</div>
<div class="t" style="left:392px;top:498px;font-size:12px;color:#dcdcdc">div</div>
<div class="t" style="left:421px;top:498px;font-size:12px;color:#dcdcdc">div</div>
<div class="abs" style="left:0px;top:513px;width:570px;height:26px;background:#292929"></div>
<div class="abs" style="left:0px;top:539px;width:570px;height:1px;background:#3d3d3d"></div>
<div class="abs" style="left:6px;top:515px;width:41px;height:25px;background:#232523;border:1px solid #3d3d3d;border-bottom:0"></div>
<div class="t" style="left:11px;top:522px;font-size:12px;color:#e6e6e6;letter-spacing:-0.25px">Styles</div>
<div class="t" style="left:52px;top:522px;font-size:12px;color:#a0a0a0;letter-spacing:-0.32px">Event Listeners</div>
<div class="t" style="left:141px;top:522px;font-size:12px;color:#a0a0a0;letter-spacing:-0.05px">DOM Breakpoints</div>
<div class="t" style="left:245px;top:522px;font-size:12px;color:#a0a0a0;letter-spacing:-0.1px">Properties</div>
<div class="abs" style="left:0px;top:566px;width:342px;height:1px;background:#3a3a3a"></div>
<div class="t" style="left:5px;top:547.5px;font-size:12px;color:#757575">Filter</div>
<div class="t" style="left:240px;top:548.5px;font-family:'Liberation Mono',monospace;font-size:11.667px;color:#c8c8c8;font-weight:bold">:hov</div>
<div class="t" style="left:278px;top:548.5px;font-family:'Liberation Mono',monospace;font-size:11.667px;color:#c8c8c8;font-weight:bold">.cls</div>
<svg class="abs" style="left:318px;top:545px" width="20" height="19"><path d="M7 2.8 L7 12.8 M2 7.8 L12 7.8" stroke="#c8c8c8" stroke-width="1.3"/><path d="M17.8 13 L17.8 17.2 L13.6 17.2 Z" fill="#c8c8c8"/></svg>
<div class="ln" style="left:5px;top:570px;color:#cfcfcf"><span style="color:#8a8a8a">element.style</span> {</div>
<div class="ln" style="left:23px;top:586px;color:#cfcfcf"><span style="color:#35d4c7">height</span>: 415px;</div>
<div class="ln" style="left:5px;top:600px;color:#cfcfcf">}</div>
<div class="abs" style="left:0px;top:617px;width:342px;height:1px;background:#3a3a3a"></div>
<div class="ln" style="left:5px;top:621px;color:#cfcfcf">.k-</div>
<div class="ln" style="left:128.5px;top:621px;color:#cfcfcf"><span style="text-decoration:underline;color:#c4c4c4">kendo.common-bo…rap.min.css:24</span></div>
<div class="ln" style="left:5px;top:635px;color:#cfcfcf">spreadsheet&gt;.k-spreadsheet-view {</div>
<div class="ln" style="left:23px;top:649px;color:#cfcfcf"><span style="color:#35d4c7">position</span>: relative;</div>
<div class="abs" style="left:341px;top:540px;width:15px;height:118px;background:#272727;border-left:1px solid #303030"></div>
<div class="abs" style="left:342px;top:540px;width:13px;height:16px;background:#3a3a3a;border:1px solid #484848"></div>
<div class="abs" style="left:355px;top:540px;width:1px;height:118px;background:#3a3a3a"></div>
<div class="abs" style="left:556px;top:540px;width:14px;height:118px;background:#272727;border-left:1px solid #303030"></div>
<div class="abs" style="left:557px;top:540px;width:13px;height:30px;background:#3a3a3a;border:1px solid #484848"></div>
<div class="abs" style="left:368px;top:551px;width:176px;height:110px;border:1px dotted #5c5c5c"></div>
<div class="t" style="left:378px;top:557.5px;font-size:10px;color:#2e2e2e">position</div>
<div class="t" style="left:453.5px;top:557.5px;font-size:10px;color:#2e2e2e">0</div>
<div class="abs" style="left:380px;top:570px;width:152px;height:100px;background:#b08354;border:1px dashed #2a2118"></div>
<div class="t" style="left:389.5px;top:575.5px;font-size:10px;color:#111;">margin</div>
<div class="t" style="left:453.5px;top:575.5px;font-size:10px;color:#111;">–</div>
<div class="abs" style="left:392px;top:589px;width:128px;height:80px;background:#e8c583;border:1px solid #f7ecd6"></div>
<div class="t" style="left:401.5px;top:594.5px;font-size:10px;color:#111;">border</div>
<div class="t" style="left:453.5px;top:594.5px;font-size:10px;color:#111;">–</div>
<div class="abs" style="left:404px;top:608px;width:104px;height:60px;background:#b8c47f;border:1px dashed #7d8278"></div>
<div class="t" style="left:413.5px;top:613.5px;font-size:10px;color:#111;">padding –</div>
<div class="abs" style="left:416px;top:627px;width:80px;height:20px;background:#87b2bc;border:1px solid #8a8f92;text-align:center;font-size:10px;line-height:20px;color:#111;white-space:pre">764 × 415</div>
<div class="t" style="left:383px;top:632px;font-size:10px;color:#111;">–</div>
<div class="t" style="left:395px;top:632px;font-size:10px;color:#111;">–</div>
<div class="t" style="left:407px;top:632px;font-size:10px;color:#111;">–</div>
<div class="t" style="left:498px;top:632px;font-size:10px;color:#111;">–</div>
<div class="t" style="left:510px;top:632px;font-size:10px;color:#111;">–</div>
<div class="t" style="left:522px;top:632px;font-size:10px;color:#111;">–</div>
<div class="t" style="left:371.5px;top:632px;font-size:10px;color:#2e2e2e">0</div>
<div class="t" style="left:534.5px;top:632px;font-size:10px;color:#2e2e2e">0</div>
<div class="t" style="left:453.5px;top:651px;font-size:10px;color:#111;">–</div>
</div>

<!-- ================= TASKBAR ================= -->
<div id="taskbar" class="abs">
  <div class="abs" style="left:0;top:1px;width:1364px;height:1px;background:#fff"></div>
<div class="abs" style="left:794px;top:0;width:570px;height:1px;background:#f1f0ed"></div>
<div class="abs" style="left:2px;top:4px;width:52px;height:37px;background:#d4d0c8;border:1px solid;border-color:#fff #404040 #404040 #fff;box-shadow:inset -1px -1px 0 #808080"></div>
<div class="abs" style="left:63px;top:4px;width:48px;height:37px;background:#fff;border:1px solid;border-color:#404040 #fff #fff #404040;box-shadow:inset 1px 1px 0 #808080"></div>
<div class="abs" style="left:213px;top:4px;width:48px;height:37px;background:#d4d0c8;border:1px solid;border-color:#fff #404040 #404040 #fff;box-shadow:inset -1px -1px 0 #808080"></div>
<div class="abs" style="left:263px;top:4px;width:48px;height:37px;background:#d4d0c8;border:1px solid;border-color:#fff #404040 #404040 #fff;box-shadow:inset -1px -1px 0 #808080"></div>
<div class="abs" style="left:313px;top:4px;width:48px;height:37px;background:#d4d0c8;border:1px solid;border-color:#fff #404040 #404040 #fff;box-shadow:inset -1px -1px 0 #808080"></div>
<div class="abs" style="left:363px;top:4px;width:48px;height:37px;background:#d4d0c8;border:1px solid;border-color:#fff #404040 #404040 #fff;box-shadow:inset -1px -1px 0 #808080"></div>
<div class="abs" style="left:413px;top:4px;width:48px;height:37px;background:#d4d0c8;border:1px solid;border-color:#fff #404040 #404040 #fff;box-shadow:inset -1px -1px 0 #808080"></div>
<div class="abs" style="left:463px;top:4px;width:48px;height:37px;background:#d4d0c8;border:1px solid;border-color:#fff #404040 #404040 #fff;box-shadow:inset -1px -1px 0 #808080"></div>
<div class="abs" style="left:513px;top:4px;width:48px;height:37px;background:#d4d0c8;border:1px solid;border-color:#fff #404040 #404040 #fff;box-shadow:inset -1px -1px 0 #808080"></div>
<div class="abs" style="left:563px;top:4px;width:48px;height:37px;background:#d4d0c8;border:1px solid;border-color:#fff #404040 #404040 #fff;box-shadow:inset -1px -1px 0 #808080"></div>
<div class="abs" style="left:613px;top:4px;width:48px;height:37px;background:#d4d0c8;border:1px solid;border-color:#fff #404040 #404040 #fff;box-shadow:inset -1px -1px 0 #808080"></div>
<div class="abs" style="left:505px;top:5px;width:1px;height:35px;background:#808080"></div>
<div class="abs" style="left:506px;top:5px;width:1px;height:36px;background:#404040"></div>
<div class="abs" style="left:507px;top:5px;width:1px;height:34px;background:#fff"></div>
<div class="abs" style="left:555px;top:5px;width:1px;height:35px;background:#808080"></div>
<div class="abs" style="left:556px;top:5px;width:1px;height:36px;background:#404040"></div>
<div class="abs" style="left:557px;top:5px;width:1px;height:34px;background:#fff"></div>
<div class="t" style="left:20.5px;top:17.5px;font-size:11.5px;font-weight:bold;color:#000;letter-spacing:0.42px">Start</div>
<div class="abs" style="left:1190px;top:4px;width:172px;height:38px;border:1px solid;border-color:#808080 #fff #fff #808080"></div>
<div class="t" style="left:1294px;top:9.5px;font-size:11px;color:#000;letter-spacing:0.1px">9:15 AM</div>
<div class="t" style="left:1291.5px;top:25.5px;font-size:11px;color:#000;letter-spacing:0.25px">2/1/2018</div>
<svg class="abs" style="left:0;top:0" width="1364" height="44" viewBox="0 724 1364 44">
<defs>
<linearGradient id="gps" x1="0" y1="0" x2="0" y2="1"><stop offset="0" stop-color="#3f8bd0"/><stop offset="1" stop-color="#1b5a9b"/></linearGradient>
<linearGradient id="gsrv" x1="0" y1="0" x2="1" y2="0"><stop offset="0" stop-color="#7d8388"/><stop offset="0.5" stop-color="#c4c8cb"/><stop offset="1" stop-color="#8a9095"/></linearGradient>
<linearGradient id="gnp" x1="0" y1="0" x2="1" y2="1"><stop offset="0" stop-color="#9fd6ea"/><stop offset="1" stop-color="#4f9fc2"/></linearGradient>
<linearGradient id="gfo" x1="0" y1="0" x2="0" y2="1"><stop offset="0" stop-color="#fbeeb4"/><stop offset="1" stop-color="#efcf6a"/></linearGradient>
</defs>
<!-- windows flag -->
<path d="M7.2 740.2 Q9.5 738.6 12 740 L10.8 745 Q8.5 743.8 6 745.4 Z" fill="#e8542c"/>
<path d="M13 740.4 Q15.5 741.6 18.6 739.6 L17.2 744.8 Q14.5 746.4 11.8 745.2 Z" fill="#7cb83a"/>
<path d="M5.8 746.4 Q8.2 744.8 10.6 746 L9.4 751 Q7 749.8 4.6 751.4 Z" fill="#3a8be0"/>
<path d="M11.6 746.4 Q14.2 747.6 17 745.8 L15.6 751 Q13 752.6 10.4 751.4 Z" fill="#f6c22c"/>
<!-- chrome -->
<circle cx="87" cy="746.8" r="14.6" fill="#fff"/>
<path d="M87 746.8 L74.4 739.5 A14.6 14.6 0 0 1 99.6 739.5 Z" fill="#dd4f43"/>
<path d="M87 746.8 L99.6 739.5 A14.6 14.6 0 0 1 87 761.4 Z" fill="#fcd34a"/>
<path d="M87 746.8 L87 761.4 A14.6 14.6 0 0 1 74.4 739.5 Z" fill="#1da362"/>
<path d="M87 739.8 L100 739.8 A14.6 14.6 0 0 0 74.4 739.5 L80.9 750.3 Z" fill="#dd4f43"/>
<path d="M93.1 750.3 L86.6 761.4 A14.6 14.6 0 0 0 100 739.8 L87 739.8 Z" fill="#fcd34a"/>
<path d="M80.9 750.3 L74.4 739.5 A14.6 14.6 0 0 0 86.6 761.4 L93.1 750.3 Z" fill="#1da362"/>
<circle cx="87" cy="746.8" r="6.9" fill="#f4f4f4"/>
<circle cx="87" cy="746.8" r="5.5" fill="#4a8af4"/>
<!-- server manager -->
<rect x="124.3" y="731.5" width="8.4" height="23.2" fill="#c9d0d5"/>
<path d="M124.6 733 L132.4 733 M124.6 735.6 L132.4 735.6 M124.6 738.2 L132.4 738.2 M124.6 740.8 L132.4 740.8 M124.6 743.4 L132.4 743.4 M124.6 746.6 L132.4 746.6 M124.6 749.6 L132.4 749.6 M124.6 752.6 L132.4 752.6" stroke="#8d979e" stroke-width="1"/>
<path d="M125.4 732.2 L130 732.2" stroke="#4f5960" stroke-width="1"/>
<path d="M132.7 731.5 L142.9 731.9 L142.9 748 L132.7 754.7 Z" fill="#9aa4aa"/>
<path d="M134 732 L142.9 732 L142.9 740 Z" fill="#b3bbc0"/>
<path d="M128.2 750 Q128.2 747.8 130.6 747.7 L146 748.2 Q148.6 748.4 149.6 749.6 L151.9 752 L151.9 759.4 Q151.6 761.6 149 761.8 L146.6 761.8 L130 758.6 Q128.2 758.2 128.2 756.4 Z" fill="#93a7b2"/>
<path d="M146.4 750 L151.6 752.2 L151.6 759.6 L146.6 761.4 Z" fill="#a9bbc4"/>
<path d="M128.4 752.8 L146.4 755 L151.6 753.4" fill="none" stroke="#7d919c" stroke-width="0.8"/>
<path d="M135 748.6 Q136 744.6 139.8 744.9 Q143.8 745.2 144.6 749.2" fill="none" stroke="#2f3438" stroke-width="1.3"/>
<circle cx="135" cy="748.4" r="0.9" fill="#e8ecee"/><circle cx="144.6" cy="749.4" r="0.9" fill="#e8ecee"/>
<rect x="131.6" y="750.8" width="1.9" height="4.6" rx="0.8" fill="#f2f4f5" stroke="#6d5a50" stroke-width="0.5"/>
<rect x="139.6" y="752" width="1.9" height="4.6" rx="0.8" fill="#f2f4f5" stroke="#6d5a50" stroke-width="0.5"/>
<!-- powershell -->
<path d="M179.5 736.2 L199.2 736.2 Q201 736.4 200.5 738 L195.6 756.2 Q195.1 757.6 193.4 757.6 L175 757.6 Q173.4 757.4 173.9 755.8 L177.6 737.6 Q178 736.3 179.5 736.2 Z" fill="url(#gps)" stroke="#86bbe6" stroke-width="1"/>
<path d="M182.6 740.6 L190.4 746.6 L180.6 752.6" fill="none" stroke="#fff" stroke-width="2.1" stroke-linejoin="round" stroke-linecap="round"/>
<path d="M187.4 753 L193 753" stroke="#fff" stroke-width="1.8" stroke-linecap="round"/>
<!-- explorer folder -->
<path d="M222 738.5 L222 736 Q222 734.6 223.4 734.6 L235 734.6 L236.6 737 L251.4 738 Q252.8 738.2 252.8 739.6 L252.8 760 L222 760 Z" fill="#f0d57e" stroke="#d2b55a" stroke-width="0.8"/>
<rect x="225" y="735.2" width="2.6" height="2" fill="#2fb24a"/><rect x="233" y="737.2" width="2.6" height="2" fill="#de3b30"/><rect x="241" y="739.2" width="2.6" height="2" fill="#2f8fe8"/>
<rect x="228.2" y="735.4" width="6" height="1.8" fill="#fff"/><rect x="236.2" y="737.4" width="6" height="1.8" fill="#fff"/><rect x="244.2" y="739.4" width="6" height="1.8" fill="#fff"/>
<path d="M222 743 Q222 741.6 223.6 741.6 L251 741.6 Q252.8 741.6 252.8 743 L252.8 760 L222 760 Z" fill="url(#gfo)" stroke="#d9bd60" stroke-width="0.6"/>
<path d="M225.6 762.4 L225.6 752.6 Q225.6 750.4 228 750.4 L246.6 750.4 Q249 750.4 249 752.6 L249 762.4 L242.8 762.4 L242.8 756.4 L231.8 756.4 L231.8 762.4 Z" fill="#8fcdf0" stroke="#4fa3dc" stroke-width="0.9"/>
<path d="M226.8 753.6 L248 753.6" stroke="#d8effb" stroke-width="1.4"/>
<!-- visual studio -->
<rect x="271" y="731" width="32" height="32" fill="#6e2a91"/>
<path d="M294.6 735.2 L299.4 737.2 L299.4 756.6 L294.6 758.8 L283 749.6 L278.6 753 L276.2 751.8 L276.2 742.2 L278.6 741 L283 744.4 Z M294.4 741.6 L287.6 747 L294.4 752.4 Z M278.8 744.4 L278.8 749.6 L281.6 747 Z" fill="#fff" fill-rule="evenodd"/>
<!-- sql tools -->
<path d="M322.4 734.6 L322.4 743.6 Q327.2 745.8 332 743.6 L332 734.6 Z" fill="#efbf2e" stroke="#c79712" stroke-width="0.6"/>
<ellipse cx="327.2" cy="734.4" rx="4.8" ry="2" fill="#fbe48c" stroke="#c79712" stroke-width="0.6"/>
<path d="M336.4 732.8 L346.4 732.8 L346.4 743.4" fill="none" stroke="#2c9a2c" stroke-width="1.8" stroke-dasharray="1.6 1.4"/>
<path d="M322.8 749.6 L322.8 756.2 L333 756.2" fill="none" stroke="#2c9a2c" stroke-width="1.8" stroke-dasharray="1.6 1.4"/>
<path d="M334.6 761.8 L346.6 749.4" stroke="#e0a424" stroke-width="2.6" stroke-linecap="round"/>
<path d="M340.8 748.6 Q345 746 348.6 749.2 L352.6 752.4 L350 755.4 L347.4 753.2 L345.4 755.2 Z" fill="#c2c8ce" stroke="#6e7780" stroke-width="0.7"/>
<path d="M334.4 751.6 L347.4 762.2" stroke="#b4bcc4" stroke-width="2.8" stroke-linecap="round"/>
<path d="M334.4 751.6 L347.4 762.2" stroke="#eef1f4" stroke-width="1.1" stroke-linecap="round"/>
<path d="M331.2 749.2 Q330.4 746 333.6 744.8 L335.2 747.8 L337.4 747 L336.8 744.4 Q340.2 745.4 339.2 749 Q337.6 751.8 334.2 751.6 Z" fill="#c2c8ce" stroke="#6e7780" stroke-width="0.7"/>
<!-- vs2008 infinity -->
<path d="M377 737.4 L384 737.4 L389.6 743 L389.6 749.4 L384 755 L377 755 L371.2 749.4 L371.2 743 Z M378.2 742.8 L376.2 744.8 L376.2 747.8 L378.2 749.8 L382.6 749.8 L384.4 747.8 L384.4 744.8 L382.6 742.8 Z" fill="#4a86d4" fill-rule="evenodd"/>
<path d="M377 737.4 L371.2 743 L371.2 746.6 L376.2 746.4 L376.2 744.8 L378.2 742.8 L380 742.8 Z" fill="#6cb843"/>
<path d="M377 737.4 L384 737.4 L389.6 743 L386 746 L382.6 742.8 L379.4 742.8 Z" fill="#f5cf35"/>
<path d="M389.8 737.4 L396.4 737.4 L402.2 743 L402.2 749.4 L396.4 755 L389.8 755 L384.4 749.4 L384.4 743 Z M391 742.8 L389.2 744.8 L389.2 747.8 L391 749.8 L395.4 749.8 L397.4 747.8 L397.4 744.8 L395.4 742.8 Z" fill="#58a643" fill-rule="evenodd"/>
<path d="M391.6 737.4 L396.4 737.4 L402.2 743 L402.2 747.4 L397.4 746.4 L397.4 744.8 L395.4 742.8 L393.4 742.8 Z" fill="#3f84d6"/>
<path d="M386.4 748.2 L392.2 755 L389.8 755 L384 750.4 Z" fill="#f0c42c"/>
<path d="M392.4 737.2 L396.4 740.8 L383 755.6 Q380.4 756.6 378.4 754.8 L377.4 751.6 Z" fill="#e4502a"/>
<path d="M392.4 737.2 L394.4 739 L378.8 753.4 L377.4 751.6 Z" fill="#f4805a"/>
<rect x="392.5" y="751.5" width="10.5" height="10.5" fill="#fff" stroke="#4d4d4d" stroke-width="1"/>
<!-- postman -->
<circle cx="438" cy="746" r="14.1" fill="#f15a24"/>
<circle cx="444.6" cy="739.4" r="3" fill="#b9bec3" stroke="#6f757b" stroke-width="0.7"/>
<path d="M444.6 737.6 L446.4 739.4 L444.6 741.2" fill="#6f757b"/>
<path d="M442.6 741.8 L427.4 759.6" stroke="#7d848b" stroke-width="3.2" stroke-linecap="round"/>
<path d="M441 742.6 L433 752" stroke="#f08a3a" stroke-width="2.2" stroke-linecap="round"/>
<path d="M441.6 744.6 L434.6 753" stroke="#d8dce0" stroke-width="0.9"/>
<path d="M424 761.8 L427 757.6 L428.8 759.6 Z" fill="#e8532b"/>
<!-- mail -->
<path d="M477.4 734.2 L494.6 737 L492.4 752 L475 749 Z" fill="#7cc36b" stroke="#58a548" stroke-width="0.6"/>
<path d="M474.6 737 L492.6 738.6 L491.6 754.6 L473.6 753 Z" fill="#f7a94a" stroke="#e08b23" stroke-width="0.6"/>
<path d="M472.8 741.4 L494.4 741.4 L494.4 758.6 L472.8 758.6 Z" fill="#a9d6f5" stroke="#4f9fe0" stroke-width="0.9"/>
<rect x="478.4" y="749.2" width="11.4" height="5" fill="#fff"/>
<rect x="488" y="743.4" width="4.2" height="3.4" fill="#d9472b"/>
<path d="M476 744.6 L484 744.6 M476 746.6 L482 746.6" stroke="#5aa2dc" stroke-width="0.7"/>
<path d="M470.4 757.6 Q478 762.6 486 758 Q491 754.6 496 757 Q499 758.6 499.6 756" fill="none" stroke="#f8c04e" stroke-width="1.9"/>
<!-- odf -->
<rect x="524.5" y="731.5" width="24" height="30" fill="#fff" stroke="#3a3a3a" stroke-width="1"/>
<path d="M528 737.5 L546 737.5 M528 741.5 L546 741.5 M528 745.5 L546 745.5 M528 749.5 L546 749.5 M528 753.5 L546 753.5 M528 757.5 L546 757.5 M528 734 L528 757.5 M534 734 L534 757.5 M540 734 L540 757.5 M546 734 L546 757.5" stroke="#9a9eb0" stroke-width="0.9" fill="none"/>
<rect x="519" y="734" width="17" height="9" fill="#1173c7"/>
<!-- notepad -->
<path d="M583.6 733.4 L599.6 736 L597.6 759.4 Q588 760.4 571.6 752.6 Z" fill="url(#gnp)"/>
<path d="M599.6 736 L601.6 754 L597.6 759.4 Z" fill="#c9b27c"/>
<path d="M597.6 759.4 L599.2 741 L601 754.4 Z" fill="#eef3f6"/>
<path d="M583.6 733.4 L599.6 736" stroke="#5a6a72" stroke-width="1.4" stroke-dasharray="0.8 0.8"/>
<path d="M590 757.8 L597.4 759.6 L598.6 747 Z" fill="#e6eef2"/>
<!-- paint -->
<path d="M631 741.4 Q640 735.6 648 739.8 Q651.6 742.6 649.6 748.6 Q646 757.6 637.6 758.8 Q631 759.6 629.6 756 Q629 753.6 626.4 753.4 Q621.6 753.2 621.2 749.8 Q621.2 745.4 631 741.4 Z" fill="#a9d3ef" stroke="#5e9fd0" stroke-width="0.9"/>
<circle cx="634.6" cy="752" r="2" fill="#e9f3fb" stroke="#6aa3cf" stroke-width="0.6"/>
<circle cx="626.6" cy="748.6" r="2.2" fill="#e04a3a"/><circle cx="631.4" cy="743.8" r="2.2" fill="#7ac043"/><circle cx="637.8" cy="741.2" r="2.2" fill="#f5b92e"/>
<path d="M637 762 L644.6 743.2 L646.6 744 Z" fill="#ec8b2a"/>
<path d="M644.6 743.2 L647 737.6 L648.4 738.2 L646.6 744 Z" fill="#8a8f94"/>
<path d="M647 737.6 Q646.6 733.4 649 731.8 Q651.6 733.8 650.6 736.6 Q649.8 738 648.4 738.2 Z" fill="#d7a56a"/>
<!-- tray: chevrons -->
<path d="M1196.4 744.4 L1199.4 741.4 L1202.4 744.4 M1196.4 748.6 L1199.4 745.6 L1202.4 748.6" fill="none" stroke="#000" stroke-width="1.7"/>
<!-- flag -->
<rect x="1213.4" y="739.4" width="2.2" height="15.2" fill="#fff" stroke="#777" stroke-width="0.8"/>
<path d="M1216 740.6 L1220.4 740.6 Q1222.6 741 1222.8 743.2 L1228.8 743 Q1228.4 747.6 1224.6 748.2 L1222.4 748.2 Q1221.8 746.6 1219.6 746.6 L1216 746.8 Z" fill="#f8f8f8" stroke="#7a7a7a" stroke-width="0.8"/>
<!-- network -->
<rect x="1241.6" y="741.3" width="11.2" height="11" fill="#fff" stroke="#6a6a6a" stroke-width="0.8"/>
<rect x="1243.4" y="743.2" width="7.6" height="7" fill="#bdbdbd"/>
<path d="M1243.2 754 L1251.4 754" stroke="#6a6a6a" stroke-width="2"/><path d="M1243.6 753.8 L1251 753.8" stroke="#fff" stroke-width="0.9"/>
<path d="M1238.2 739.4 L1238.2 744.4 M1242.4 739.4 L1242.4 744.4 M1237.6 744.8 L1243 744.8 M1240.3 745 L1240.3 754.2 L1243 754.2" fill="none" stroke="#6a6a6a" stroke-width="2.4"/>
<path d="M1238.2 739.6 L1238.2 744.4 M1242.4 739.6 L1242.4 744.4 M1238 744.8 L1242.6 744.8 M1240.3 745 L1240.3 754 L1243 754" fill="none" stroke="#fff" stroke-width="1"/>
<!-- speaker -->
<path d="M1261.2 744 L1263.6 744 L1268.4 740 L1268.4 754.4 L1263.6 750.4 L1261.2 750.4 Z" fill="#f6f6f6" stroke="#7a7a7a" stroke-width="0.8"/>
<circle cx="1272.4" cy="749.8" r="4.6" fill="#de2a2a"/>
<path d="M1270.2 747.6 L1274.6 752 M1274.6 747.6 L1270.2 752" stroke="#fff" stroke-width="1.5"/>
<!-- show desktop -->
<rect x="1344.5" y="741.5" width="15" height="12" fill="#2b6fd3" stroke="#9cc0ee" stroke-width="0.8"/>
<path d="M1345 744 L1359 748 L1359 742 L1345 742 Z" fill="#4d8fe6"/>
<rect x="1345" y="750.6" width="14" height="2.4" fill="#1f2f4a"/>
<rect x="1346" y="749.6" width="2" height="2" fill="#e0c040"/>
</svg>
<div class="t" style="left:521px;top:11.4px;font-size:6.4px;font-weight:bold;color:#fff;letter-spacing:0px">ODF</div>
<div class="t" style="left:395px;top:28.5px;font-size:9.5px;color:#222">9</div>
</div>

</div>
</body>
</html>
